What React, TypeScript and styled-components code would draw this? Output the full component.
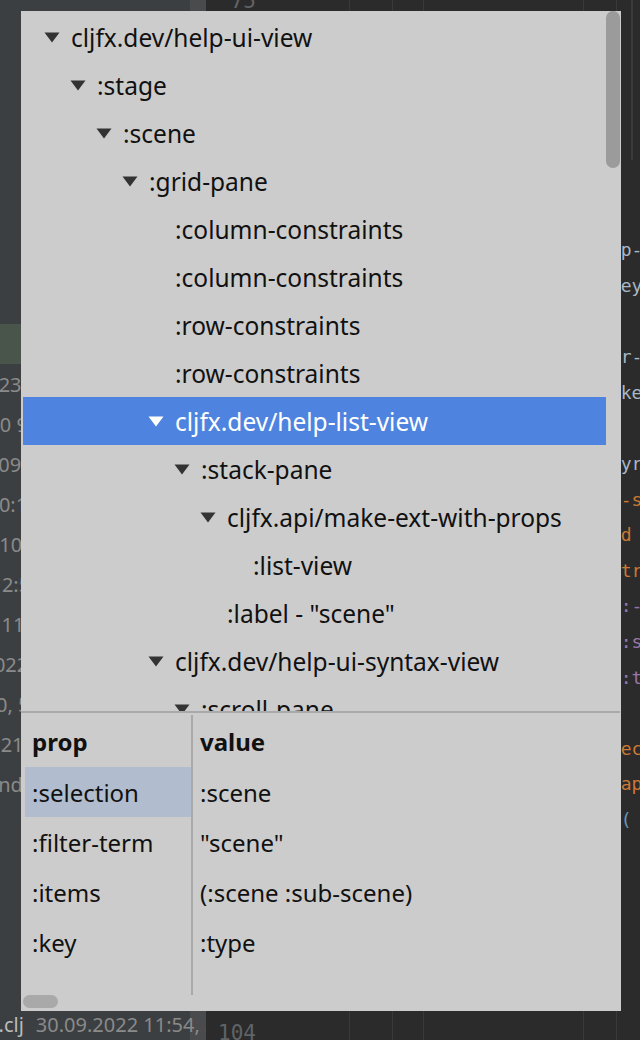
import React from "react";
import styled, { createGlobalStyle } from "styled-components";

const UI_FONT = `"Noto Sans", "Open Sans", sans-serif`;
const MONO_FONT = `"DejaVu Sans Mono", "Liberation Mono", monospace`;

const GlobalStyle = createGlobalStyle`
  html, body {
    margin: 0;
    padding: 0;
    background: #2b2b2b;
  }
  body {
    width: 640px;
    height: 1040px;
    overflow: hidden;
  }
`;

type FileEntry = { name?: string; meta?: string; shift: number; selected?: boolean };

const files: FileEntry[] = [
  { name: "cljfx", shift: 40 },
  { name: "src", shift: 64 },
  { name: "cljfx", shift: 88 },
  { name: "api.clj", shift: 112 },
  { name: "coerce.clj", shift: 112 },
  { name: "composite.clj", shift: 112 },
  { name: "dev", shift: 88 },
  { name: "help.clj", shift: 112 },
  { name: "dev.clj", shift: 112, selected: true },
  { meta: "30.09.2022 11:23, 3.1 kB", shift: -137 },
  { meta: "12.10.2020 9:14, 1.4 kB", shift: -91 },
  { meta: "30.09.2022 10:02, 6.2 kB", shift: -30 },
  { meta: "30.09.2022 10:17, 2.7 kB", shift: -120 },
  { meta: "05.10.2022 08:40, 1.1 kB", shift: -29 },
  { meta: "30.09.2022 12:51, 4.8 kB", shift: -117 },
  { meta: "29.09.2022 11:05, 9.3 kB", shift: -106 },
  { meta: "28.09.2022 17:33, 2.2 kB", shift: -74 },
  { meta: "16.09.2022 14:30, 5.0 kB", shift: -151 },
  { meta: "15.09.2022 10:21, 3.4 kB", shift: -135 },
  { meta: "ExpandYaml.clj", shift: -47 },
  { name: "test", shift: 40 },
  { name: "cljfx", shift: 64 },
  { name: "api_test.clj", shift: 88 },
  { name: "examples", shift: 40 },
  { name: "e01_hello.clj", shift: 64 },
  { name: "dev.clj", meta: "30.09.2022 11:54, 2.9 kB", shift: -34 },
];

type CodeLine = { no: number; text: string; frag?: string; color?: string; rest?: string };

const DEFAULT = "#a9b7c6";
const KEYWORD = "#cc7832";
const PURPLE = "#9876aa";
const PAREN = "#6897bb";

// the visible fragment of a line starts at column 33
const pad = (s: string) => s.slice(0, 33).padEnd(33, " ");

const code: CodeLine[] = [
  { no: 75, text: "" },
  { no: 76, text: "(defn help-ui-view" },
  { no: 77, text: "  [{:keys [state] :as props}]" },
  { no: 78, text: "  (let [{:keys [selection" },
  { no: 79, text: "                filter-term" },
  { no: 80, text: "                items]} state]" },
  { no: 81, text: "    {:fx/type :v-box" },
  { no: 82, text: pad("     :children [{:fx/type :text"), frag: "p-", color: DEFAULT, rest: "field" },
  { no: 83, text: pad("       :text filter-term :k"), frag: "ey", color: DEFAULT, rest: " key" },
  { no: 84, text: "" },
  { no: 85, text: pad("       :on-text-changed {:filte"), frag: "r-", color: DEFAULT, rest: "term" },
  { no: 86, text: pad("                         :ma"), frag: "ke", color: DEFAULT, rest: "-event" },
  { no: 87, text: "" },
  { no: 88, text: pad("      {:fx/type help-ui-s"), frag: "yr", color: DEFAULT, rest: "ntax" },
  { no: 89, text: pad("       :fx/type fx/ext-on"), frag: "-s", color: KEYWORD, rest: "et" },
  { no: 90, text: pad("       (if (contains? items :a"), frag: "d", color: KEYWORD, rest: "" },
  { no: 91, text: pad("         (some-> selection :s"), frag: "tr", color: KEYWORD, rest: "ing" },
  { no: 92, text: pad("         {:fx/type :list-view"), frag: ":-", color: PURPLE, rest: "" },
  { no: 93, text: pad("          :items items"), frag: ":s", color: PURPLE, rest: "el" },
  { no: 94, text: pad("          :cell-factory"), frag: ":t", color: PURPLE, rest: "ype" },
  { no: 95, text: "" },
  { no: 96, text: pad("          :on-selected-item-chang"), frag: "ec", color: KEYWORD, rest: "t" },
  { no: 97, text: pad("          (fn [x] (swap! state"), frag: "ap", color: KEYWORD, rest: "ply" },
  { no: 98, text: pad("                       assoc :sel"), frag: "(", color: PAREN, rest: "" },
  { no: 99, text: "                 x)))}]}))" },
  { no: 100, text: "" },
  { no: 101, text: "" },
  { no: 102, text: "" },
  { no: 103, text: "" },
  { no: 104, text: "" },
];

type TreeItem = { label: string; level: number; branch?: boolean; selected?: boolean };

const tree: TreeItem[] = [
  { label: "cljfx.dev/help-ui-view", level: 0, branch: true },
  { label: ":stage", level: 1, branch: true },
  { label: ":scene", level: 2, branch: true },
  { label: ":grid-pane", level: 3, branch: true },
  { label: ":column-constraints", level: 4 },
  { label: ":column-constraints", level: 4 },
  { label: ":row-constraints", level: 4 },
  { label: ":row-constraints", level: 4 },
  { label: "cljfx.dev/help-list-view", level: 4, branch: true, selected: true },
  { label: ":stack-pane", level: 5, branch: true },
  { label: "cljfx.api/make-ext-with-props", level: 6, branch: true },
  { label: ":list-view", level: 7 },
  { label: ':label - "scene"', level: 6 },
  { label: "cljfx.dev/help-ui-syntax-view", level: 4, branch: true },
  { label: ":scroll-pane", level: 5, branch: true },
  { label: ":text-flow", level: 6, branch: true },
];

const props = [
  { prop: ":selection", value: ":scene", selected: true },
  { prop: ":filter-term", value: '"scene"' },
  { prop: ":items", value: "(:scene :sub-scene)" },
  { prop: ":key", value: ":type" },
];

const Arrow: React.FC<{ light?: boolean }> = ({ light }) => (
  <svg width="16" height="11" viewBox="0 0 16 11">
    <polygon points="0.5,0.5 15.5,0.5 8,10.5" fill={light ? "#ffffff" : "#333333"} />
  </svg>
);

const App: React.FC = () => {
  return (
    <Screen>
      <GlobalStyle />
      <FilePane>
        {files.map((f, i) => (
          <FileRow key={i} $selected={f.selected}>
            <FileText $shift={f.shift}>
              {f.name && <FileName>{f.name}</FileName>}
              {f.meta && <FileMeta $spaced={!!f.name}>{f.meta}</FileMeta>}
            </FileText>
          </FileRow>
        ))}
      </FilePane>

      <Editor>
        <EditorBody>
          {code.map((l) => (
            <EditorLine key={l.no}>
              <LineNo>{l.no}</LineNo>
              <Code>
                {l.text}
                {l.frag && <Token $color={l.color || DEFAULT}>{l.frag}</Token>}
                {l.rest}
              </Code>
            </EditorLine>
          ))}
        </EditorBody>
      </Editor>

      <Popup>
        <TreeArea>
          <TreeList>
            {tree.map((t, i) => (
              <TreeRow key={i} $level={t.level} $selected={t.selected}>
                <ArrowSlot>{t.branch && <Arrow light={t.selected} />}</ArrowSlot>
                <TreeLabel>{t.label}</TreeLabel>
              </TreeRow>
            ))}
          </TreeList>
          <VScroll>
            <VThumb />
          </VScroll>
        </TreeArea>
        <Divider />
        <PropTable>
          <PropColumn $first>
            <HeaderCell>prop</HeaderCell>
            {props.map((p) => (
              <Cell key={p.prop} $selected={p.selected}>
                {p.prop}
              </Cell>
            ))}
          </PropColumn>
          <PropColumn>
            <HeaderCell>value</HeaderCell>
            {props.map((p) => (
              <Cell key={p.prop}>{p.value}</Cell>
            ))}
          </PropColumn>
        </PropTable>
        <HScroll>
          <HThumb />
        </HScroll>
      </Popup>
    </Screen>
  );
};

export default App;

const Screen = styled.div`
  position: relative;
  display: flex;
  width: 640px;
  height: 1040px;
  overflow: hidden;
  font-family: ${UI_FONT};
`;

const FilePane = styled.div`
  width: 206px;
  flex-shrink: 0;
  display: flex;
  flex-direction: column;
  padding-top: 4px;
  box-sizing: border-box;
  overflow: hidden;
  background: linear-gradient(to left, #4a4b4c 16px, #3c3f41 16px);
`;

const FileRow = styled.div<{ $selected?: boolean }>`
  height: 40px;
  flex-shrink: 0;
  display: flex;
  align-items: center;
  white-space: nowrap;
  background: ${(p) => (p.$selected ? "#49544a" : "transparent")};
`;

const FileText = styled.div<{ $shift: number }>`
  margin-left: ${(p) => p.$shift}px;
  font-size: 20px;
`;

const FileName = styled.span`
  color: #bbbbbb;
`;

const FileMeta = styled.span<{ $spaced?: boolean }>`
  color: #8a8a8a;
  margin-left: ${(p) => (p.$spaced ? "12px" : "0")};
`;

const Editor = styled.div`
  flex: 1;
  overflow: hidden;
  background-color: #2b2b2b;
  background-image: linear-gradient(#393939, #393939), linear-gradient(#393939, #393939),
    linear-gradient(#393939, #393939), linear-gradient(#393939, #393939),
    linear-gradient(#393939, #393939), linear-gradient(#3a3a3a, #3a3a3a);
  background-size: 1px 100%, 1px 100%, 1px 100%, 1px 100%, 1px 100%, 2px 160px;
  background-position: 143px 0, 186px 0, 217px 0, 377px 0, 410px 0, 425px 0;
  background-repeat: no-repeat;
`;

const EditorBody = styled.div`
  display: flex;
  flex-direction: column;
  margin-top: -17px;
`;

const EditorLine = styled.div`
  height: 35.6px;
  flex-shrink: 0;
  display: flex;
  align-items: center;
  font-family: ${MONO_FONT};
  white-space: pre;
`;

const LineNo = styled.span`
  width: 50px;
  flex-shrink: 0;
  text-align: right;
  font-size: 21px;
  color: #606366;
`;

const Code = styled.span`
  padding-left: 7px;
  font-size: 18px;
  color: ${DEFAULT};
`;

const Token = styled.span<{ $color: string }>`
  color: ${(p) => p.$color};
`;

const Popup = styled.div`
  position: absolute;
  left: 21px;
  top: 11px;
  width: 600px;
  height: 1000px;
  display: flex;
  flex-direction: column;
  background: #cccccc;
  color: #111111;
  font-family: ${UI_FONT};
  font-size: 24px;
`;

const TreeArea = styled.div`
  height: 700px;
  flex-shrink: 0;
  display: flex;
`;

const TreeList = styled.div`
  flex: 1;
  min-width: 0;
  display: flex;
  flex-direction: column;
  padding: 2px 0 0 2px;
  overflow: hidden;
`;

const TreeRow = styled.div<{ $level: number; $selected?: boolean }>`
  height: 48px;
  flex-shrink: 0;
  display: flex;
  align-items: center;
  padding-left: ${(p) => 21 + p.$level * 26}px;
  font-size: 24.5px;
  white-space: nowrap;
  background: ${(p) => (p.$selected ? "#4e84df" : "transparent")};
  color: ${(p) => (p.$selected ? "#ffffff" : "#111111")};
`;

const ArrowSlot = styled.span`
  width: 27px;
  flex-shrink: 0;
  display: flex;
  align-items: center;
`;

const TreeLabel = styled.span`
  line-height: 1;
  padding-top: 3px;
`;

const VScroll = styled.div`
  width: 14px;
  margin-right: 1px;
  flex-shrink: 0;
`;

const VThumb = styled.div`
  height: 157px;
  border-radius: 7px;
  background: #9b9b9b;
`;

const Divider = styled.div`
  height: 2px;
  margin-right: 1px;
  flex-shrink: 0;
  background: #a9a9a9;
`;

const PropTable = styled.div`
  display: flex;
  height: 280px;
  flex-shrink: 0;
  margin: 2px 0 0 4px;
`;

const PropColumn = styled.div<{ $first?: boolean }>`
  display: flex;
  flex-direction: column;
  width: ${(p) => (p.$first ? "166px" : "auto")};
  flex: ${(p) => (p.$first ? "0 0 auto" : "1")};
  border-right: ${(p) => (p.$first ? "2px solid #a9a9a9" : "none")};
`;

const HeaderCell = styled.div`
  height: 52px;
  display: flex;
  align-items: center;
  padding-left: 7px;
  font-weight: 700;
`;

const Cell = styled.div<{ $selected?: boolean }>`
  height: 50px;
  display: flex;
  align-items: center;
  padding-left: 7px;
  white-space: nowrap;
  background: ${(p) => (p.$selected ? "#b1bccf" : "transparent")};
`;

const HScroll = styled.div`
  height: 16px;
  flex-shrink: 0;
  padding-left: 2px;
`;

const HThumb = styled.div`
  width: 35px;
  height: 13px;
  border-radius: 7px;
  background: #a9a9a9;
`;
